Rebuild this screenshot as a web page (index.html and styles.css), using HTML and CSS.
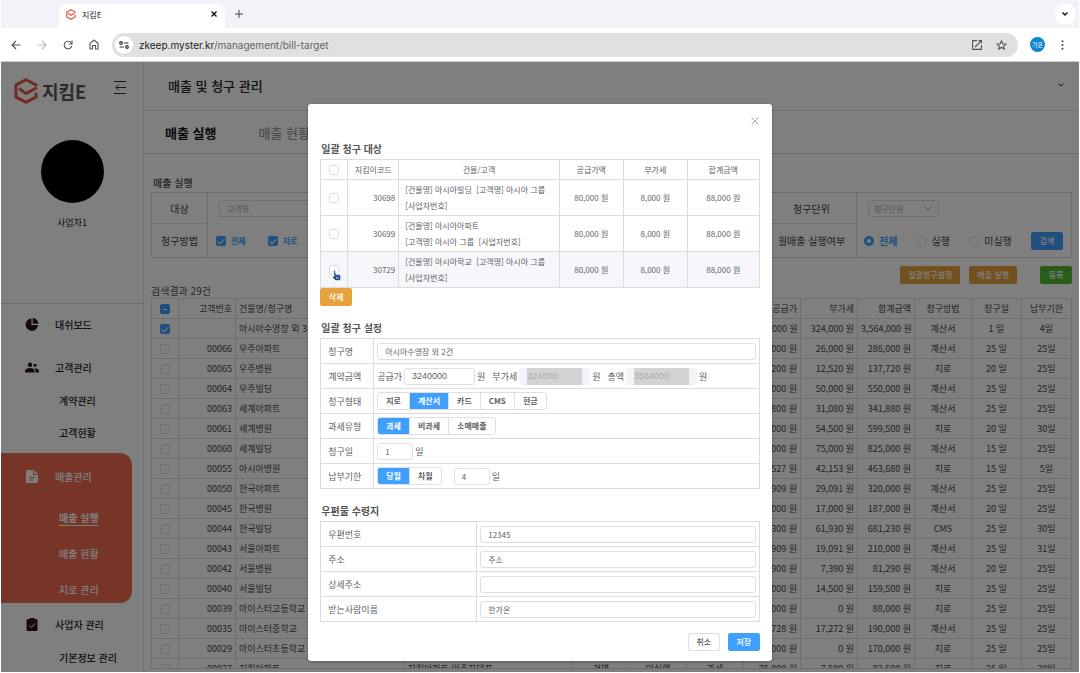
FILE: index.html
```
<!DOCTYPE html>
<html lang="ko">

<head>
    <meta charset="UTF-8">
    <meta name="viewport" content="width=device-width, initial-scale=1.0">
    <title>지킴E</title>
    <link rel="stylesheet" href="styles.css">
</head>

<body>
    <!-- browser -->
    <div class="tab-bar">
        <div class="tab">
            <svg class="tab-logo" viewBox="0 0 24 26" fill="none" stroke="#e2593f" stroke-width="3">
                <path d="M22 8V7L12 1.500 2 7v12l10 5.500 10-5.500v-5"/>
                <path d="M5 10l7 5 10-6"/>
            </svg>
            <span>지킴E</span>
            <button class="icon-btn tab-close" aria-label="탭 닫기">
                <svg width="6" height="6" viewBox="0 0 6 6" stroke="#111" stroke-width="1.400"><path d="M.5.5l5 5M5.500.5l-5 5"/></svg>
            </button>
        </div>
        <button class="icon-btn" aria-label="새 탭">
            <svg width="8" height="8" viewBox="0 0 8 8" stroke="#444" stroke-width="1"><path d="M4 0v8M0 4h8"/></svg>
        </button>
        <button class="icon-btn tab-list" aria-label="탭 검색">
            <svg width="6" height="4" viewBox="0 0 6 4" fill="none" stroke="#111" stroke-width="1.400"><path d="M.5.5L3 3 5.500.5"/></svg>
        </button>
    </div>
    <div class="toolbar">
        <button class="icon-btn" aria-label="뒤로">
            <svg width="10" height="10" viewBox="0 0 10 10" fill="none" stroke="#555" stroke-width="1.100"><path d="M9.500 5H1M5 1L1 5l4 4"/></svg>
        </button>
        <button class="icon-btn" aria-label="앞으로">
            <svg width="10" height="10" viewBox="0 0 10 10" fill="none" stroke="#bbb" stroke-width="1.100"><path d="M.5 5H9M5 1l4 4-4 4"/></svg>
        </button>
        <button class="icon-btn" aria-label="새로고침">
            <svg width="10" height="10" viewBox="0 0 10 10" fill="none" stroke="#555" stroke-width="1.100"><path d="M8.700 6A3.800 3.800 0 1 1 8 2.700L9 4"/><path d="M9 .5V4H5.800"/></svg>
        </button>
        <button class="icon-btn" aria-label="홈">
            <svg width="10" height="11" viewBox="0 0 10 11" fill="none" stroke="#555" stroke-width="1.100"><path d="M1 4.300L5 1l4 3.300V10H6.500V6.500h-3V10H1z"/></svg>
        </button>
        <div class="address">
            <span class="site-info">
                <svg width="10" height="8" viewBox="0 0 10 8" fill="none" stroke="#333" stroke-width="1.200"><circle cx="2" cy="2" r="1.300"/><path d="M5 2h4.500M.5 6H5"/><circle cx="8" cy="6" r="1.300"/></svg>
            </span>
            <span class="url">zkeep.myster.kr<span>/management/bill-target</span></span>
            <svg width="10" height="10" viewBox="0 0 10 10" fill="none" stroke="#555" stroke-width="1.100"><path d="M5 .6H.6v8.800h8.800V5M6.500.6h2.900v2.900M9.200.8L3 7"/></svg>
            <svg width="11" height="10" viewBox="0 0 11 10" fill="none" stroke="#555" stroke-width="1.100"><path d="M5.500.9l1.300 2.900 3.200.3-2.400 2 .7 3-2.800-1.600-2.800 1.600.7-3-2.400-2 3.200-.3z"/></svg>
        </div>
        <span class="profile">가온</span>
        <button class="icon-btn" aria-label="메뉴">
            <svg width="3" height="10" viewBox="0 0 3 10" fill="#444"><circle cx="1.500" cy="1.200" r="1"/><circle cx="1.500" cy="5" r="1"/><circle cx="1.500" cy="8.800" r="1"/></svg>
        </button>
    </div>

    <div class="app">
        <aside class="sidebar">
            <div class="brand">
                <svg width="24" height="26" viewBox="0 0 24 26" fill="none" stroke="#e2593f" stroke-width="3">
                    <path d="M22 8V7L12 1.700 2 7v12l10 5.300 10-5.300v-4.500"/>
                    <path d="M5 10.500l7 5 11-6"/>
                </svg>
                <strong>지킴E</strong>
                <svg class="fold" width="12" height="13" viewBox="0 0 12 13" fill="none" stroke="#333"><path d="M0 .5h12M0 12.500h12M2 6.500h10M5 3.500l-3 3 3 3"/></svg>
            </div>
            <div class="avatar"></div>
            <div class="user-name">사업자1</div>
            <nav class="menu">
                <a href="#" class="top">
                    <svg width="13" height="13" viewBox="0 0 13 13" fill="#2a1714"><path d="M6 .5v6.500h6.500A6.200 6.200 0 1 1 6 .5z"/><path d="M7.200 0A5.800 5.800 0 0 1 13 5.800H7.200z"/></svg>
                    대쉬보드
                </a>
                <a href="#" class="top">
                    <svg width="14" height="11" viewBox="0 0 14 11" fill="#2a1714"><circle cx="5" cy="2.700" r="2.200"/><circle cx="10" cy="3.300" r="1.500"/><path d="M0 10.500V8.500Q1 6 5 6t4.500 2.500v2zM10.500 10.500V8.300L9.300 6.500Q13.500 6 14 9v1.500z"/></svg>
                    고객관리
                </a>
                <a href="#" class="sub">계약관리</a>
                <a href="#" class="sub">고객현황</a>
                <div class="menu-active">
                    <a href="#" class="top">
                        <svg width="12" height="13" viewBox="0 0 12 13" fill="#fff"><path d="M1.500 0H7.500L12 4.300V11.500Q12 13 10.500 13h-9Q0 13 0 11.500v-10Q0 0 1.500 0z"/><path d="M3 7.500h6M3 10h4M7.500 1v3.500H11" stroke="#e9674f" fill="none"/></svg>
                        매출관리
                    </a>
                    <a href="#" class="sub current">매출 실행</a>
                    <a href="#" class="sub">매출 현황</a>
                    <a href="#" class="sub">지로 관리</a>
                </div>
                <a href="#" class="top">
                    <svg width="11" height="13" viewBox="0 0 11 13" fill="#2a1714"><rect y="1" width="11" height="12" rx="1.500"/><rect x="3" width="5" height="3" rx="1"/><path d="M3 7.500l2 2 3.500-4" stroke="#fff" fill="none"/></svg>
                    사업자 관리
                </a>
                <a href="#" class="sub">기본정보 관리</a>
            </nav>
        </aside>

        <main class="content">
            <header class="page-head">
                <h1>매출 및 청구 관리</h1>
                <svg width="6" height="4" viewBox="0 0 6 4" fill="none" stroke="#333"><path d="M.5.5L3 3 5.500.5"/></svg>
            </header>
            <nav class="page-tabs">
                <a href="#" class="on">매출 실행</a>
                <a href="#">매출 현황</a>
            </nav>

            <section class="panel">
                <h2>매출 실행</h2>
                <div class="filter">
                    <label class="name" for="customer">대상</label>
                    <div class="field"><input type="text" id="customer" placeholder="고객명"></div>
                    <label class="name" for="unit">청구단위</label>
                    <div class="field">
                        <div class="select-box">
                            <select id="unit"><option>청구단위</option></select>
                            <svg width="8" height="5" viewBox="0 0 8 5" fill="none" stroke="#999"><path d="M.5.5L4 4 7.500.5"/></svg>
                        </div>
                    </div>
                    <span class="name">청구방법</span>
                    <div class="field checks">
                        <label><input type="checkbox" checked> 전체</label>
                        <label><input type="checkbox" checked> 지로</label>
                    </div>
                    <span class="name">월매출 실행여부</span>
                    <div class="field radios">
                        <label><input type="radio" name="run" checked> <b>전체</b></label>
                        <label><input type="radio" name="run"> 실행</label>
                        <label><input type="radio" name="run"> 미실행</label>
                        <button class="btn primary">검색</button>
                    </div>
                </div>
                <div class="actions">
                    <button class="btn warning">일괄청구설정</button>
                    <button class="btn warning">매출 실행</button>
                    <button class="btn success">등록</button>
                </div>
                <p class="count">검색결과 29건</p>
                <div class="list-wrap">
                    <table class="list">
                        <colgroup>
                            <col class="c-check"><col class="c-mid"><col class="c-name"><col class="c-name">
                            <col class="c-mid"><col class="c-mid"><col class="c-mid"><col class="c-mid"><col class="c-mid">
                            <col class="c-mid"><col class="c-mid"><col class="c-day"><col class="c-day">
                        </colgroup>
                        <thead>
                            <tr>
                                <th class="center"><input type="checkbox" class="some" aria-label="전체 선택"></th>
                                <th class="right">고객번호</th>
                                <th>건물명/청구명</th>
                                <th>고객명</th>
                                <th class="center">발행</th>
                                <th class="center">실행여부</th>
                                <th class="center">과세</th>
                                <th class="right">공급가</th>
                                <th class="right">부가세</th>
                                <th class="right">합계금액</th>
                                <th class="center">청구방법</th>
                                <th class="center">청구일</th>
                                <th class="center">납부기한</th>
                            </tr>
                        </thead>
                        <tbody id="rows"></tbody>
                    </table>
                </div>
            </section>
        </main>

        <div class="overlay">
            <div class="modal" role="dialog" aria-label="일괄 청구 설정">
                <button class="icon-btn modal-close" aria-label="닫기">
                    <svg width="8" height="8" viewBox="0 0 8 8" stroke="#a8abb2" stroke-width="1"><path d="M.5.5l7 7M7.500.5l-7 7"/></svg>
                </button>

                <h3>일괄 청구 대상</h3>
                <table class="targets">
                    <colgroup><col class="t-check"><col class="t-code"><col><col class="t-num"><col class="t-num"><col class="t-sum"></colgroup>
                    <thead>
                        <tr>
                            <th><input type="checkbox" aria-label="전체 선택"></th>
                            <th>지킴이코드</th>
                            <th>건물/고객</th>
                            <th>공급가액</th>
                            <th>부가세</th>
                            <th>합계금액</th>
                        </tr>
                    </thead>
                    <tbody>
                        <tr>
                            <td><input type="checkbox" aria-label="30698"></td>
                            <td class="right">30698</td>
                            <td class="left">[건물명] 아시아빌딩 &nbsp;[고객명] 아시아 그룹<br>[사업자번호]</td>
                            <td>80,000 원</td>
                            <td>8,000 원</td>
                            <td>88,000 원</td>
                        </tr>
                        <tr>
                            <td><input type="checkbox" aria-label="30699"></td>
                            <td class="right">30699</td>
                            <td class="left">[건물명] 아시아아파트<br>[고객명] 아시아 그룹 &nbsp;[사업자번호]</td>
                            <td>80,000 원</td>
                            <td>8,000 원</td>
                            <td>88,000 원</td>
                        </tr>
                        <tr class="hover">
                            <td>
                                <div class="pointed">
                                    <input type="checkbox" aria-label="30729">
                                    <svg class="hand" width="11" height="13" viewBox="0 0 13 14"><path d="M3 1.500Q4-.2 5 1.500l.8 4 4.200.7q1.800.5 1.600 2.300l-.6 4.500H5.500L1.200 8.800Q1 7.300 3.800 8z" fill="#1d4e89" stroke="#fff" stroke-width=".7"/><path d="M6.500 8.500v2.500M8.500 8.500v2.500" stroke="#fff" stroke-width=".7"/></svg>
                                </div>
                            </td>
                            <td class="right">30729</td>
                            <td class="left">[건물명] 아시아학교 &nbsp;[고객명] 아시아 그룹<br>[사업자번호]</td>
                            <td>80,000 원</td>
                            <td>8,000 원</td>
                            <td>88,000 원</td>
                        </tr>
                    </tbody>
                </table>
                <button class="btn warning">삭제</button>

                <h3 class="next-title">일괄 청구 설정</h3>
                <div class="form settings">
                    <label class="name" for="billName">청구명</label>
                    <div class="value"><input type="text" id="billName" value="아시아수영장 외 2건"></div>

                    <span class="name">계약금액</span>
                    <div class="value">
                        <label for="supply">공급가</label>
                        <input type="text" class="money" id="supply" value="3240000">
                        <span>원</span>
                        <label for="vat" class="next">부가세</label>
                        <span class="locked"><input type="text" id="vat" value="324000" disabled></span>
                        <span>원</span>
                        <label for="total" class="next">총액</label>
                        <span class="locked"><input type="text" id="total" value="3564000" disabled></span>
                        <span>원</span>
                    </div>

                    <span class="name">청구형태</span>
                    <div class="value">
                        <div class="group">
                            <label><input type="radio" name="type"><span>지로</span></label>
                            <label><input type="radio" name="type" checked><span>계산서</span></label>
                            <label><input type="radio" name="type"><span>카드</span></label>
                            <label><input type="radio" name="type"><span>CMS</span></label>
                            <label><input type="radio" name="type"><span>현금</span></label>
                        </div>
                    </div>

                    <span class="name">과세유형</span>
                    <div class="value">
                        <div class="group">
                            <label><input type="radio" name="tax" checked><span>과세</span></label>
                            <label><input type="radio" name="tax"><span>비과세</span></label>
                            <label><input type="radio" name="tax"><span>소매매출</span></label>
                        </div>
                    </div>

                    <label class="name" for="billDay">청구일</label>
                    <div class="value">
                        <input type="text" class="day" id="billDay" value="1">
                        <span>일</span>
                    </div>

                    <label class="name" for="dueDay">납부기한</label>
                    <div class="value">
                        <div class="group due">
                            <label><input type="radio" name="due" checked><span>당월</span></label>
                            <label><input type="radio" name="due"><span>차월</span></label>
                        </div>
                        <input type="text" class="day" id="dueDay" value="4">
                        <span>일</span>
                    </div>
                </div>

                <h3 class="next-title">우편물 수령지</h3>
                <div class="form mail">
                    <label class="name" for="zip">우편번호</label>
                    <div class="value"><input type="text" id="zip" value="12345"></div>
                    <label class="name" for="addr">주소</label>
                    <div class="value"><input type="text" id="addr" value="주소"></div>
                    <label class="name" for="addr2">상세주소</label>
                    <div class="value"><input type="text" id="addr2"></div>
                    <label class="name" for="receiver">받는사람이름</label>
                    <div class="value"><input type="text" id="receiver" value="한가온"></div>
                </div>

                <div class="modal-foot">
                    <button class="btn">취소</button>
                    <button class="btn primary">저장</button>
                </div>
            </div>
        </div>
    </div>

    <script src="list.js"></script>
</body>

</html>
```
FILE: list.js
```
// number, name, supply, vat, total, method, bill day, due day
const bills = [
    ['', '아시아수영장 외 3건', '3,240,000', '324,000', '3,564,000', '계산서', 1, 4],
    ['00066', '우주아파트', '260,000', '26,000', '286,000', '계산서', 25, 25],
    ['00065', '우주병원', '125,200', '12,520', '137,720', '지로', 20, 25],
    ['00064', '우주빌딩', '500,000', '50,000', '550,000', '계산서', 25, 25],
    ['00063', '세계아파트', '310,800', '31,080', '341,880', '계산서', 25, 25],
    ['00061', '세계병원', '545,000', '54,500', '599,500', '지로', 20, 30],
    ['00060', '세계빌딩', '750,000', '75,000', '825,000', '계산서', 15, 25],
    ['00055', '아시아병원', '421,527', '42,153', '463,680', '지로', 15, 5],
    ['00050', '한국아파트', '290,909', '29,091', '320,000', '계산서', 25, 25],
    ['00045', '한국병원', '170,000', '17,000', '187,000', '계산서', 20, 25],
    ['00044', '한국빌딩', '619,300', '61,930', '681,230', 'CMS', 25, 30],
    ['00043', '서울아파트', '190,909', '19,091', '210,000', '계산서', 25, 31],
    ['00042', '서울병원', '73,900', '7,390', '81,290', '계산서', 20, 25],
    ['00040', '서울빌딩', '145,000', '14,500', '159,500', '지로', 25, 25],
    ['00039', '마이스터고등학교', '88,000', '0', '88,000', '지로', 25, 25],
    ['00035', '마이스터중학교', '172,728', '17,272', '190,000', '계산서', 25, 25],
    ['00029', '마이스터초등학교', '170,000', '0', '170,000', '지로', 25, 25],
    ['00027', '지킴아파트', '75,000', '7,500', '82,500', '지로', 25, 30]
];

document.getElementById('rows').innerHTML = bills.map((b, i) => `
    <tr>
        <td class="center"><input type="checkbox" aria-label="${b[1]}" ${i === 0 ? 'checked' : ''}></td>
        <td class="right">${b[0]}</td>
        <td>${b[1]}</td>
        <td>${b[0] === '00027' ? '지킴아파트 입주자대표' : ''}</td>
        <td class="center">건별</td>
        <td class="center">미실행</td>
        <td class="center">과세</td>
        <td class="right">${b[2]} 원</td>
        <td class="right">${b[3]} 원</td>
        <td class="right">${b[4]} 원</td>
        <td class="center">${b[5]}</td>
        <td class="center">${b[6]} 일</td>
        <td class="center">${b[7]}일</td>
    </tr>`).join('');
```
FILE: styles.css
```
* {
    box-sizing: border-box;
}

body {
    margin: 0;
    height: 100vh;
    display: flex;
    flex-direction: column;
    overflow: hidden;
    padding: 0 1px 1px;
    background: #fff;
    font-family: 'Noto Sans CJK KR', sans-serif;
    font-size: 9px;
    color: #606266;
}

h1, h2, h3, p {
    margin: 0;
}

a {
    color: inherit;
    text-decoration: none;
}

button, input, select {
    font-family: inherit;
    font-size: 8px;
    color: inherit;
}

svg {
    flex: none;
}

.icon-btn {
    display: flex;
    align-items: center;
    justify-content: center;
    padding: 0;
    border: 0;
    background: none;
}

/* browser */
.tab-bar {
    flex: none;
    display: flex;
    align-items: center;
    height: 28px;
    padding: 0 4px 0 58px;
    background: #f2f2f8;
}

.tab {
    align-self: flex-end;
    display: flex;
    align-items: center;
    width: 166px;
    height: 24px;
    margin-right: 10px;
    padding: 0 8px 4px 7px;
    border-radius: 8px 8px 0 0;
    background: #fff;
    color: #222;
    font-size: 8px;
}

.tab-logo {
    width: 10px;
    height: 11px;
    margin-right: 6px;
}

.tab-close {
    margin-left: auto;
}

.tab-list {
    width: 20px;
    height: 20px;
    margin-left: auto;
    border-radius: 7px;
    background: #fff;
}

.toolbar {
    flex: none;
    display: flex;
    align-items: center;
    gap: 16px;
    height: 34px;
    padding: 0 15px 0 10px;
    border-bottom: 1px solid #d0d0d0;
}

.address {
    flex: 1;
    display: flex;
    align-items: center;
    gap: 14px;
    height: 24px;
    margin: 0 -4px 0 -3px;
    padding: 0 11px 0 3px;
    border-radius: 12px;
    background: #e0e0e0;
}

.site-info {
    display: flex;
    align-items: center;
    justify-content: center;
    width: 18px;
    height: 18px;
    border-radius: 50%;
    background: #fff;
}

.url {
    flex: 1;
    margin-left: -8px;
    color: #222;
    font-family: Inter, sans-serif;
    font-size: 10px;
}

.url span {
    color: #606060;
}

.profile {
    width: 15px;
    height: 15px;
    border-radius: 50%;
    background: #0b86cf;
    color: #fff;
    font-size: 6px;
    line-height: 15px;
    text-align: center;
}

/* app */
.app {
    position: relative;
    flex: 1;
    display: flex;
    min-height: 0;
    overflow: hidden;
}

.sidebar {
    flex: none;
    width: 143px;
    border-right: 1px solid #e0e0e0;
    color: #222;
}

.brand {
    display: flex;
    align-items: center;
    height: 26px;
    margin: 16px 17px 36px 13px;
}

.brand strong {
    margin-left: 4px;
    font-size: 18px;
    font-weight: 700;
    color: #555;
    line-height: 26px;
}

.fold {
    margin: -8px 0 0 auto;
}

.avatar {
    width: 63px;
    height: 63px;
    margin: 0 auto;
    border-radius: 50%;
    background: #000;
}

.user-name {
    height: 101px;
    padding-top: 12px;
    border-bottom: 1px solid #d8d8d8;
    text-align: center;
    line-height: 16px;
}

.menu {
    margin-top: -1px;
    font-size: 10px;
    font-weight: 500;
}

.menu a {
    display: flex;
    align-items: center;
    height: 32px;
}

.menu .top {
    gap: 16px;
    height: 43px;
    padding-left: 24px;
}

.menu .top svg {
    width: 14px;
}

.menu .sub {
    padding-left: 58px;
}

.menu > .top + .sub {
    margin-top: -5px;
}

.menu-active {
    height: 150px;
    margin: 5px 11px 0 0;
    border-radius: 0 12px 12px 0;
    background: #ee6a51;
    color: #fff;
}

.menu-active .top {
    height: 46px;
}

.menu-active .sub {
    height: 36px;
}

.menu-active .current {
    font-weight: 700;
    text-decoration: underline;
    text-underline-offset: 3px;
}

.content {
    flex: 1;
    min-width: 0;
}

.page-head {
    display: flex;
    align-items: center;
    justify-content: space-between;
    height: 49px;
    padding: 0 15px 2px 24px;
    border-bottom: 1px solid #e0e0e0;
}

h1 {
    color: #222;
    font-size: 13px;
    font-weight: 500;
}

.page-tabs {
    display: flex;
    align-items: center;
    gap: 42px;
    height: 43px;
    padding-left: 21px;
    border-bottom: 1px solid #d8d8d8;
    color: #999;
    font-size: 13px;
    font-weight: 500;
}

.page-tabs .on {
    color: #111;
    font-weight: 700;
}

.panel {
    padding: 19px 7px 0;
}

h2 {
    margin-left: 2px;
    color: #444;
    font-size: 10px;
    font-weight: 500;
    line-height: 19px;
}

.filter {
    display: grid;
    grid-template-columns: 56px 1fr 90px 214px;
    grid-template-rows: 31px 33px;
    border: 1px solid #d8d8d8;
    font-size: 10px;
}

.filter .name {
    display: flex;
    align-items: center;
    justify-content: center;
    border-right: 1px solid #d8d8e4;
    color: #444;
}

.filter .name:nth-child(-n+3) {
    border-bottom: 1px solid #e0e0e8;
}

.field {
    display: flex;
    align-items: center;
    padding: 0 9px 0 11px;
}

.field input[type="text"] {
    width: 180px;
}

input[type="text"], select {
    height: 17px;
    padding: 0 7px;
    border: 1px solid #dcdfe6;
    border-radius: 3px;
    background: #fff;
    outline: none;
}

.select-box {
    display: grid;
    align-items: center;
    width: 71px;
}

.select-box > * {
    grid-area: 1 / 1;
}

.select-box select {
    width: 100%;
    padding: 0 5px;
    appearance: none;
    color: #a0a3aa;
}

.select-box svg {
    justify-self: end;
    margin-right: 7px;
}

::placeholder {
    color: #a8abb2;
}

input[type="checkbox"] {
    display: block;
    appearance: none;
    flex: none;
    width: 10px;
    height: 10px;
    margin: 0 auto;
    border: 1px solid #dcdfe6;
    border-radius: 2px;
    background: #fff;
}

input[type="checkbox"]:checked, .some[type="checkbox"] {
    border-color: #409eff;
    background: #409eff;
}

input[type="checkbox"]:checked::after {
    content: '';
    display: block;
    width: 3px;
    height: 6px;
    margin: 0 auto;
    border: solid #fff;
    border-width: 0 1px 1px 0;
    transform: rotate(45deg);
}

.some[type="checkbox"]::after {
    content: '';
    display: block;
    height: 1px;
    margin: 4px 2px;
    background: #fff;
}

.checks {
    gap: 22px;
    padding-left: 8px;
    color: #409eff;
    font-size: 8px;
    font-weight: 700;
}

.checks label, .radios label {
    display: flex;
    align-items: center;
    gap: 5px;
}

.radios {
    justify-content: space-between;
    padding: 0 8px 0 7px;
    color: #444;
}

.radios b {
    color: #409eff;
}

.radios input {
    appearance: none;
    width: 10px;
    height: 10px;
    margin: 0;
    border: 1px solid #dcdfe6;
    border-radius: 50%;
}

.radios input:checked {
    border: 3px solid #409eff;
    background: #fff;
}

.btn {
    min-width: 32px;
    height: 18px;
    padding: 0 7px;
    border: 1px solid #dcdfe6;
    border-radius: 2px;
    background: #fff;
    font-weight: 500;
    line-height: 16px;
}

.primary {
    border-color: #409eff;
    background: #409eff;
    color: #fff;
}

.warning {
    border-color: #e6a23c;
    background: #e6a23c;
    color: #fff;
}

.success {
    border-color: #53b82c;
    background: #53b82c;
    color: #fff;
}

.actions {
    display: flex;
    justify-content: flex-end;
    gap: 9px;
    margin-top: 8px;
}

.actions .success {
    margin-left: 14px;
}

.count {
    color: #555;
    font-size: 10px;
    line-height: 14px;
}

.list-wrap {
    height: 371px;
    overflow: hidden;
    border-bottom: 1px solid #d8d8d8;
}

table {
    width: 100%;
    border-collapse: collapse;
    table-layout: fixed;
}

th, td {
    padding: 0 3px;
    border: 1px solid #dcdcdc;
    font-weight: 400;
    white-space: nowrap;
}

.list th, .list td {
    height: 20px;
    color: #444;
    line-height: 18px;
    text-align: left;
}

.list .right, .targets .right {
    text-align: right;
}

.list .center {
    text-align: center;
}

.c-check { width: 27px; }
.c-mid { width: 57px; }
.c-day { width: 50px; }

/* modal */
.overlay {
    position: absolute;
    inset: 0;
    display: flex;
    align-items: flex-start;
    justify-content: center;
    padding-top: 42px;
    background: rgba(0, 0, 0, 0.5);
}

.modal {
    width: 43%;
    padding: 12px 12px 10px;
    border-radius: 3px;
    background: #fff;
    box-shadow: 0 1px 3px rgba(0, 0, 0, 0.3);
}

.modal-close {
    width: 10px;
    height: 10px;
    margin: 0 0 13px auto;
}

h3 {
    padding: 0 0 1px 1px;
    color: #555;
    font-size: 10px;
    font-weight: 700;
    line-height: 19px;
}

.next-title {
    margin-top: 12px;
}

.targets {
    font-size: 8px;
    text-align: center;
}

.targets th, .targets td {
    height: 36px;
    line-height: 16px;
}

.targets th {
    height: 20px;
}

.targets .left {
    padding: 1px 6px;
    text-align: left;
}

.targets .hover {
    background: #f5f7fa;
}

.t-check { width: 27px; }
.t-code { width: 51px; }
.t-num { width: 64px; }
.t-sum { width: 72px; }

.pointed {
    position: relative;
}

.hand {
    position: absolute;
    top: 4px;
    left: 7px;
}

.modal > .warning {
    display: block;
}

.form {
    display: grid;
    grid-auto-rows: 25px;
    border: solid #dcdcdc;
    border-width: 1px 1px 0;
}

.settings {
    grid-template-columns: 53px 1fr;
}

.mail {
    grid-template-columns: 156px 1fr;
}

.form .name {
    padding-left: 7px;
    border: solid #dcdcdc;
    border-width: 0 1px 1px 0;
    line-height: 25px;
}

.value {
    display: flex;
    align-items: center;
    gap: 2px;
    padding: 0 3px;
    border-bottom: 1px solid #dcdcdc;
}

.value input[type="text"] {
    flex: 1;
    min-width: 0;
}

.value input.money, .locked {
    flex: none;
    width: 71px;
}

.value input.money, .locked input {
    font-family: 'Liberation Sans', sans-serif;
    font-size: 9px;
}

.next {
    margin-left: 5px;
}

.locked {
    display: flex;
    height: 17px;
    padding: 0 8px;
    border-radius: 3px;
    background: #f3f4f9;
}

.locked input[type="text"] {
    padding: 0;
    border: 0;
    border-radius: 0;
    background: #d3d3d3;
    color: #a8abb2;
}

.value input.day {
    flex: none;
    width: 36px;
}

.group {
    display: flex;
    height: 18px;
    border: 1px solid #dcdfe6;
    border-radius: 3px;
    overflow: hidden;
    font-size: 8px;
    font-weight: 700;
    line-height: 16px;
}

.group input {
    position: absolute;
    opacity: 0;
}

.group span {
    display: block;
    padding: 0 8px;
}

.group label + label {
    border-left: 1px solid #dcdfe6;
}

.group input:checked + span {
    background: #409eff;
    color: #fff;
}

.due {
    margin-right: 10px;
}

.modal-foot {
    display: flex;
    justify-content: flex-end;
    gap: 8px;
    margin-top: 11px;
}
```
